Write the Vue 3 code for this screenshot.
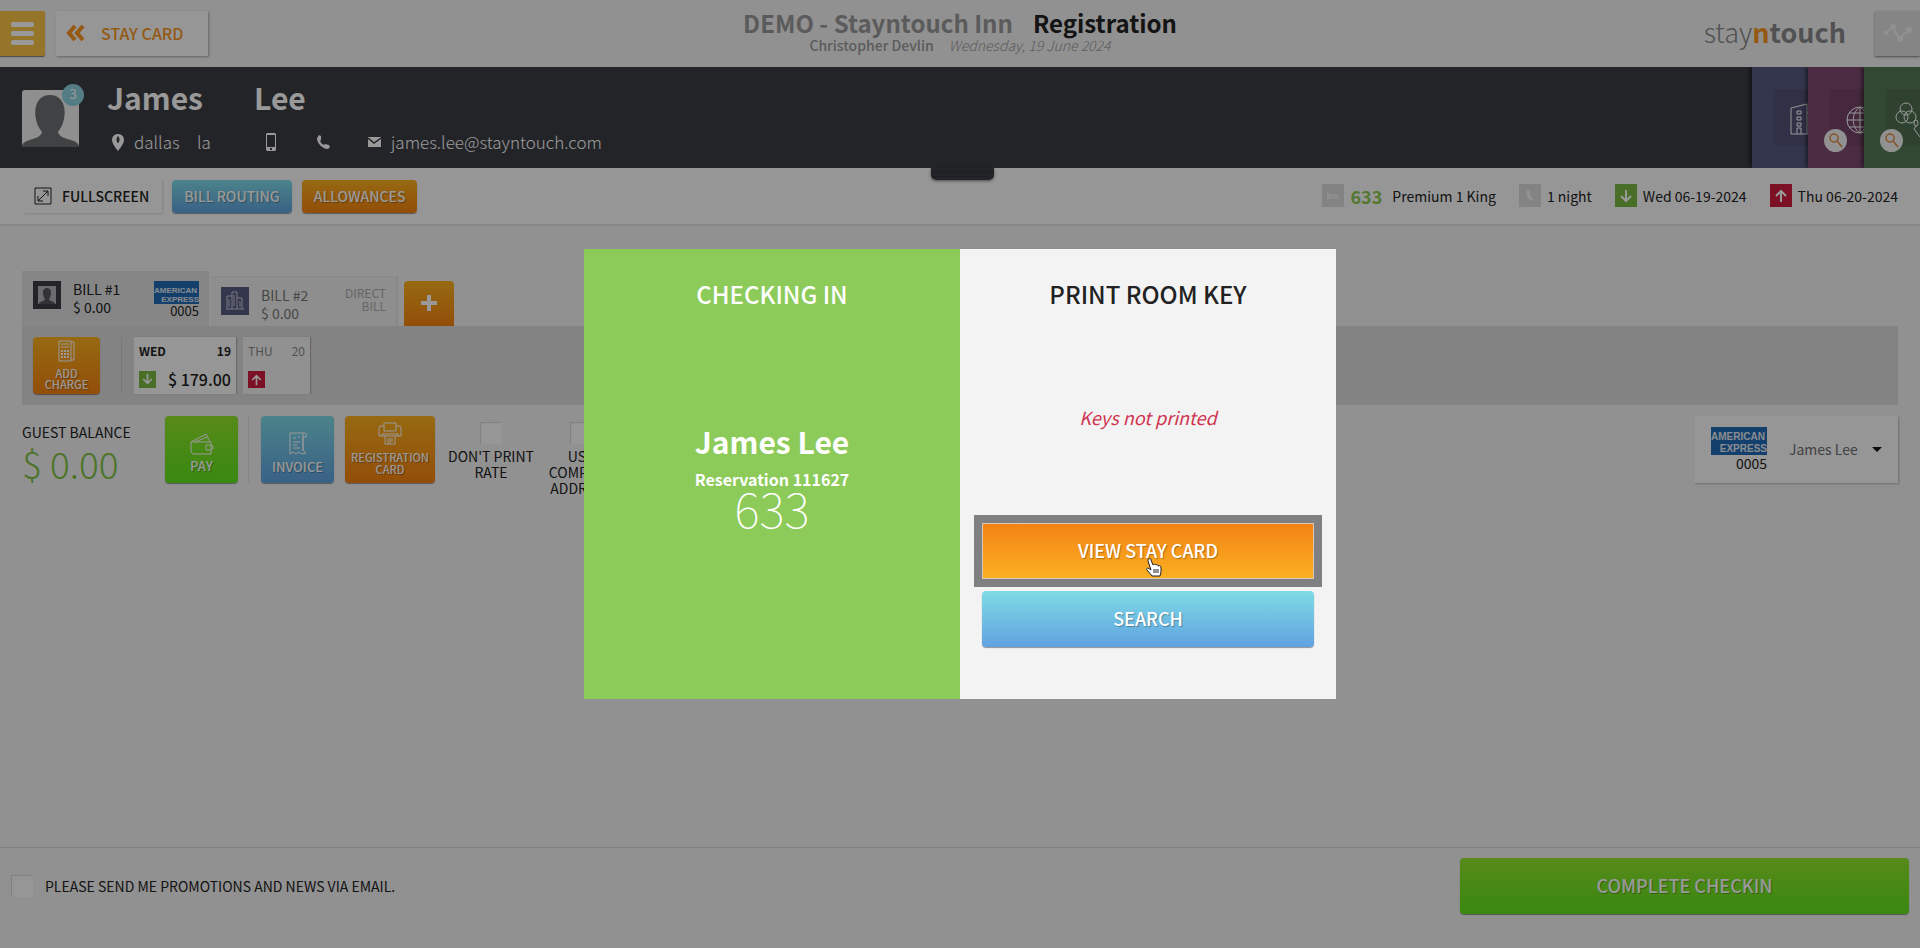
<template>
  <div class="page">
    <header class="top-bar">
      <div class="top-left">
        <button type="button" class="menu-btn" aria-label="Menu">
          <span></span><span></span><span></span>
        </button>
        <button type="button" class="back-btn">
          <svg width="20" height="18" viewBox="0 0 20 18">
            <path d="M9 2 L3 9 L9 16 M17 2 L11 9 L17 16" fill="none" stroke="currentColor" stroke-width="4" />
          </svg>
          STAY CARD
        </button>
      </div>
      <div class="top-title">
        <h1><span class="hotel">DEMO - Stayntouch Inn</span><span>Registration</span></h1>
        <p><strong>Christopher Devlin</strong><em>Wednesday, 19 June 2024</em></p>
      </div>
      <div class="top-right">
        <div class="logo"><span class="thin">stay</span><span class="accent">n</span><span>touch</span></div>
        <button type="button" class="activity-btn" aria-label="Activity">
          <svg width="30" height="22" viewBox="0 0 30 22">
            <path d="M3 11 L9 5 L17 17 L21 12 L26 9" fill="none" stroke="currentColor" stroke-width="2" />
            <circle cx="3" cy="11" r="2" fill="currentColor" />
            <circle cx="10" cy="5" r="3" fill="currentColor" />
            <circle cx="17" cy="17" r="3" fill="currentColor" />
            <circle cx="26" cy="8" r="3" fill="currentColor" />
          </svg>
        </button>
      </div>
    </header>

    <section class="guest-bar">
      <div class="avatar">
        <svg width="57" height="57" viewBox="0 0 57 57">
          <path d="M0 57 C0 48 18 51 20 42 C10 30 10 5 28 5 C46 5 46 30 36 42 C38 51 57 48 57 57 Z" fill="#6d6e70" />
        </svg>
        <span class="badge">3</span>
      </div>
      <div class="guest-info">
        <h2><span class="first-name">James</span><span>Lee</span></h2>
        <div class="contacts">
          <span class="contact city">
            <svg width="12" height="17" viewBox="0 0 12 17">
              <path fill-rule="evenodd" d="M6 0 C2 0 0 3 0 6 C0 10 6 17 6 17 C6 17 12 10 12 6 C12 3 10 0 6 0 Z M6 2 A3 4 0 0 1 6 9 A3 4 0 0 1 6 2 Z" fill="currentColor" />
            </svg>
            dallas
          </span>
          <span class="contact state">la</span>
          <span class="contact mobile">
            <svg width="10" height="18" viewBox="0 0 10 18">
              <path fill-rule="evenodd" d="M1 0 H9 L10 1 V17 L9 18 H1 L0 17 V1 Z M1 2 V14 H9 V2 Z M4 15 V17 H6 V15 Z" fill="currentColor" />
            </svg>
          </span>
          <span class="contact phone">
            <svg width="13" height="14" viewBox="0 0 13 14">
              <path d="M2 0 L4 1 L4 5 L3 6 C4 8 5 9 7 10 L8 9 L12 10 L13 12 L11 14 C6 14 0 9 0 3 Z" fill="currentColor" />
            </svg>
          </span>
          <span class="contact">
            <svg width="13" height="10" viewBox="0 0 13 10">
              <path d="M0 0 H13 V10 H0 Z" fill="currentColor" />
              <path d="M0 1 L6 6 L13 1" fill="none" stroke="#3b3d43" stroke-width="1.5" />
            </svg>
            james.lee@stayntouch.com
          </span>
        </div>
      </div>
      <div class="side-cards">
        <a href="#" class="side-card company" aria-label="Company">
          <span class="tile">
            <svg width="34" height="34" viewBox="0 0 34 34">
              <path d="M1 31 V5 L17 1 V31 Z M17 10 H30 V31 H17 M7 31 V25 H11 V31 M7 8 H11 V11 H7 Z M7 14 H11 V17 H7 Z M7 20 H11 V23 H7 Z" />
            </svg>
          </span>
        </a>
        <a href="#" class="side-card agent" aria-label="Travel agent">
          <span class="tile">
            <svg width="34" height="34" viewBox="0 0 34 34">
              <path d="M14 4 A13 13 0 0 1 14 30 A13 13 0 0 1 14 4 Z M14 4 V30 M1 17 H27 M3 10 H25 M3 24 H25 M14 4 C5 10 5 24 14 30 M14 4 C23 10 23 24 14 30" />
            </svg>
          </span>
          <span class="find">
            <svg width="14" height="15" viewBox="0 0 14 15">
              <circle cx="5" cy="5" r="4" />
              <path d="M8 8 L13 14" />
            </svg>
          </span>
        </a>
        <a href="#" class="side-card group" aria-label="Group">
          <span class="tile">
            <svg width="40" height="40" viewBox="0 0 40 40">
              <circle cx="14" cy="8" r="6" />
              <circle cx="10" cy="16" r="6" />
              <circle cx="18" cy="16" r="6" />
              <path d="M24 19 A2 3 0 0 1 24 25 A2 3 0 0 1 24 19 M24 25 L22 28 L28 36 L34 36" />
            </svg>
          </span>
          <span class="find">
            <svg width="14" height="15" viewBox="0 0 14 15">
              <circle cx="5" cy="5" r="4" />
              <path d="M8 8 L13 14" />
            </svg>
          </span>
        </a>
      </div>
      <span class="drag-handle"></span>
    </section>

    <section class="toolbar">
      <div class="tool-buttons">
        <button type="button" class="plain-btn">
          <svg width="18" height="18" viewBox="0 0 18 18">
            <path d="M1 1 H17 V17 H1 Z M4 14 L14 4 M9 4 H14 V9 M4 9 V14 H9" fill="none" stroke="currentColor" />
          </svg>
          FULLSCREEN
        </button>
        <button type="button" class="btn blue small">BILL ROUTING</button>
        <button type="button" class="btn orange small">ALLOWANCES</button>
      </div>
      <ul class="stay-info">
        <li>
          <span class="chip">
            <svg width="14" height="10" viewBox="0 0 16 12">
              <path d="M2 2 V10 M2 8 H14 V10 M4 5 H7 M8 5 H14" fill="none" stroke="currentColor" stroke-width="2" />
            </svg>
          </span>
          <b class="room">633</b>Premium 1 King
        </li>
        <li>
          <span class="chip">
            <svg width="14" height="14" viewBox="0 0 14 14">
              <path d="M4 1 C2 8 6 13 13 11 C8 10 7 7 7 2 Z" fill="currentColor" />
            </svg>
          </span>
          1 night
        </li>
        <li>
          <span class="chip in">
            <svg width="12" height="14" viewBox="0 0 12 14"><path d="M6 1 V12 M1 7 L6 12 L11 7" /></svg>
          </span>
          Wed 06-19-2024
        </li>
        <li>
          <span class="chip out">
            <svg width="12" height="14" viewBox="0 0 12 14"><path d="M6 13 V2 M1 7 L6 2 L11 7" /></svg>
          </span>
          Thu 06-20-2024
        </li>
      </ul>
    </section>

    <main class="content">
      <div class="tabs">
        <button type="button" class="tab active">
          <span class="tab-icon dark">
            <svg width="18" height="18" viewBox="0 0 18 18">
              <path d="M0 0 H18 V18 H0 Z" fill="#b4b5b7" />
              <path d="M1 18 C1 15 6 16 7 13 C4 9 4 2 9 2 C14 2 14 9 11 13 C12 16 17 15 17 18 Z" fill="#55565a" />
            </svg>
          </span>
          <span class="tab-text">BILL #1<br />$ 0.00</span>
          <span class="card-type">
            <span class="amex"><span>AMERICAN</span><span>EXPRESS</span></span>
            0005
          </span>
        </button>
        <button type="button" class="tab">
          <span class="tab-icon purple">
            <svg width="18" height="20" viewBox="0 0 18 20">
              <path d="M1 18 V5 H6 M6 18 V1 H11 V18 M11 7 H16 V18 M0 18 H18 M3 8 V16 M8 4 V15 M14 10 V16" fill="none" stroke="#c9c8d6" />
            </svg>
          </span>
          <span class="tab-text">BILL #2<br />$ 0.00</span>
          <span class="direct">DIRECT<br />BILL</span>
        </button>
        <button type="button" class="add-tab orange" aria-label="Add bill">
          <svg width="18" height="18" viewBox="0 0 18 18"><path d="M9 1 V17 M1 9 H17" stroke="#fff" stroke-width="4" /></svg>
        </button>
      </div>

      <div class="bill-panel">
        <button type="button" class="btn orange charge">
          <svg width="17" height="22" viewBox="0 0 17 22">
            <path d="M1 1 H13 V21 H1 Z M13 2 H16 V20 H13 M3 4 H11 M3 7 H11" />
            <path d="M3 11 H12 M3 14 H12 M3 17 H12" stroke-width="2" stroke-dasharray="2 1" />
          </svg>
          <span>ADD<br />CHARGE</span>
        </button>
        <div class="days">
          <div v-for="day in days" :key="day.name" class="day" :class="day.kind">
            <div class="day-row head"><span>{{ day.name }}</span><span>{{ day.date }}</span></div>
            <div class="day-row">
              <span class="chip mini" :class="day.kind">
                <svg width="11" height="12" viewBox="0 0 12 14">
                  <path :d="day.kind === 'in' ? 'M6 1 V12 M1 7 L6 12 L11 7' : 'M6 13 V2 M1 7 L6 2 L11 7'" />
                </svg>
              </span>
              <b>{{ day.amount }}</b>
            </div>
          </div>
        </div>
      </div>

      <div class="balance-row">
        <div class="balance">
          <span>GUEST BALANCE</span>
          <strong>$ 0.00</strong>
        </div>
        <div class="pay-wrap">
          <button type="button" class="btn green square">
            <svg width="24" height="22" viewBox="0 0 24 22">
              <path d="M1 9 H21 V21 H3 L1 19 Z M1 9 L16 1 L20 9 M5 9 L17 4 M21 12 H16 V17 H21 M21 13 H23 V16 H21" />
            </svg>
            PAY
          </button>
        </div>
        <button type="button" class="btn blue square">
          <svg width="20" height="24" viewBox="0 0 20 24">
            <path d="M2 1 H15 V18 L18 21 L14 22 L11 20 L8 22 L5 20 L2 22 Z M15 1 C18 0 19 2 18 5 H15 M15 5 V19 M5 6 H8 M10 5 H12 M5 10 H12 M5 13 H9 M5 16 H12" />
          </svg>
          INVOICE
        </button>
        <button type="button" class="btn orange reg-card">
          <svg width="24" height="24" viewBox="0 0 24 24">
            <path d="M6 9 V1 H18 V9 Z M6 4 H2 L1 6 V14 H23 V6 L22 4 H18 M4 14 V12 H20 V14 M7 14 V22 H17 V14 M9 17 H15 M9 19 H15 M9 21 H13" />
          </svg>
          <span>REGISTRATION<br />CARD</span>
        </button>
        <div class="options">
          <label class="option"><input v-model="hideRate" type="checkbox" />DON'T PRINT RATE</label>
          <label class="option"><input v-model="companyAddress" type="checkbox" />USE COMPANY ADDRESS</label>
        </div>
        <div class="payer">
          <span class="card-type large">
            <span class="amex"><span>AMERICAN</span><span>EXPRESS</span></span>
            0005
          </span>
          <select v-model="payer" aria-label="Payer">
            <option>James Lee</option>
          </select>
          <svg class="caret" width="10" height="5" viewBox="0 0 10 5"><path d="M0 0 H10 L5 5 Z" fill="#111" /></svg>
        </div>
      </div>
    </main>

    <footer class="footer">
      <label class="promo"><input v-model="promotions" type="checkbox" />PLEASE SEND ME PROMOTIONS AND NEWS VIA EMAIL.</label>
      <button type="button" class="btn green complete">COMPLETE CHECKIN</button>
    </footer>

    <div class="overlay">
      <div class="dialog" role="dialog" aria-modal="true" aria-label="Checking in">
        <div class="dialog-left">
          <h3>CHECKING IN</h3>
          <div class="summary">
            <p class="guest">James Lee</p>
            <p class="reservation">Reservation 111627</p>
            <p class="room-no">633</p>
          </div>
        </div>
        <div class="dialog-right">
          <h3>PRINT ROOM KEY</h3>
          <p class="key-status">Keys not printed</p>
          <div class="dialog-actions">
            <button type="button" class="btn view-card">VIEW STAY CARD
              <svg class="pointer" width="18" height="19" viewBox="0 0 18 19">
                <path d="M4 1 C5 0 6 1 6 2 L8 7 C9 6 10 6 11 7 C12 6 13 7 13 8 C15 7 16 8 16 10 L16 14 L15 18 H7 L2 12 C1 11 2 10 3 10 L6 12 L3 3 C3 2 3 1 4 1 Z" fill="#fff" stroke="#222" />
                <path d="M9 11 V15 M11 11 V15 M13 11 V15" stroke="#222" />
              </svg>
            </button>
            <button type="button" class="btn blue">SEARCH</button>
          </div>
        </div>
      </div>
    </div>
  </div>
</template>

<script setup>
import { ref } from 'vue';

const hideRate = ref(false);
const companyAddress = ref(false);
const promotions = ref(false);
const payer = ref('James Lee');

const days = [
  { name: 'WED', date: '19', kind: 'in', amount: '$ 179.00' },
  { name: 'THU', date: '20', kind: 'out', amount: '' }
];
</script>

<style>
body {
  background: #f2f2f2;
}
</style>

<style scoped>
* {
  box-sizing: border-box;
}

.page {
  min-height: 100vh;
  display: flex;
  flex-direction: column;
  background: #f2f2f2;
  color: #222;
  font-family: "Noto Sans CJK SC", "Noto Sans", sans-serif;
  font-size: 14px;
  line-height: 16px;
  overflow: hidden;
}

h1, h2, h3, p, ul {
  margin: 0;
  padding: 0;
}

button, input, select {
  font: inherit;
  color: inherit;
  margin: 0;
  padding: 0;
  border: none;
}

button {
  cursor: pointer;
}

svg {
  flex: none;
}

.btn {
  display: flex;
  flex-direction: column;
  justify-content: center;
  align-items: center;
  padding-bottom: 2px;
  color: #fff;
  font-weight: 500;
  border-radius: 4px;
  text-shadow: 1px 1px 1px rgba(0, 0, 0, 0.3);
  box-shadow: 0 1px 1px rgba(0, 0, 0, 0.4);
}

.btn svg {
  fill: none;
  stroke: currentColor;
}

.blue {
  background: linear-gradient(#7edbe6, #60a2e0);
}

.orange {
  background: linear-gradient(#fbb01f, #f4820f);
}

.green {
  background: linear-gradient(#92e62b, #5fe41c);
}

.top-bar {
  height: 67px;
  display: grid;
  grid-template-columns: 1fr auto 1fr;
  align-items: center;
}

.top-left {
  display: flex;
  gap: 11px;
}

.menu-btn {
  width: 45px;
  height: 45px;
  padding-left: 11px;
  display: flex;
  flex-direction: column;
  justify-content: center;
  gap: 4px;
  background: #f9c446;
  border-radius: 0 2px 2px 0;
  box-shadow: 0 1px 1px rgba(0, 0, 0, 0.5);
}

.menu-btn span {
  width: 23px;
  height: 5px;
  border-radius: 2px;
  background: #fff;
}

.back-btn {
  height: 45px;
  display: flex;
  align-items: center;
  padding: 0 24px 2px 10px;
  gap: 15px;
  background: #fafafa;
  color: #f7941e;
  font-size: 16px;
  font-weight: 500;
  box-shadow: 1px 1px 2px rgba(0, 0, 0, 0.3);
}

.top-title {
  padding-bottom: 5px;
  text-align: center;
}

.top-title h1 {
  font-size: 24px;
  line-height: 28px;
}

.top-title .hotel {
  color: #98989a;
  margin-right: 20px;
}

.top-title p {
  color: #999;
}

.top-title strong {
  font-weight: 500;
  margin-right: 15px;
}

.top-title em {
  font-weight: 300;
}

.top-right {
  display: flex;
  justify-content: flex-end;
  align-items: center;
  gap: 29px;
}

.logo {
  padding-bottom: 4px;
  font-size: 27px;
  line-height: 32px;
  font-weight: 700;
  color: #88888a;
}

.logo .thin {
  font-weight: 300;
}

.logo .accent {
  color: #f7941e;
}

.activity-btn {
  width: 45px;
  height: 45px;
  background: #dedede;
  color: #f2f2f2;
  box-shadow: 0 1px 2px rgba(0, 0, 0, 0.5);
}

.guest-bar {
  position: relative;
  height: 101px;
  display: flex;
  background: #3b3d43;
  color: #fff;
}

.avatar {
  position: relative;
  width: 57px;
  height: 57px;
  margin: 23px 0 0 22px;
  background: #eee;
  border-radius: 3px;
}

.badge {
  position: absolute;
  top: -6px;
  right: -5px;
  width: 22px;
  height: 22px;
  border-radius: 50%;
  background: #8ad0dc;
  font-size: 13px;
  line-height: 20px;
  text-align: center;
}

.guest-info {
  flex: 1;
  padding: 12px 0 0 28px;
}

.guest-info h2 {
  display: flex;
  font-size: 30px;
  line-height: 36px;
}

.first-name {
  width: 147px;
}

.contacts {
  display: flex;
  margin-top: 17px;
  padding-left: 5px;
  font-size: 17px;
  line-height: 20px;
  font-weight: 300;
}

.contact {
  display: flex;
  align-items: center;
  gap: 10px;
}

.city {
  width: 85px;
}

.state {
  width: 69px;
}

.mobile {
  width: 51px;
}

.phone {
  width: 51px;
}

.side-cards {
  display: flex;
  padding-left: 6px;
  overflow: hidden;
}

.side-card {
  position: relative;
  width: 56px;
  overflow: hidden;
  padding: 22px 0 0 22px;
  box-shadow: -2px 0 4px rgba(0, 0, 0, 0.5);
}

.company {
  background: #575a80;
}

.agent {
  background: #7d4a70;
}

.group {
  background: #547956;
}

.tile {
  display: block;
  width: 57px;
  height: 57px;
  padding: 14px 0 0 16px;
  background: rgba(0, 0, 0, 0.08);
}

.group .tile {
  padding: 12px 0 0 6px;
}

.tile svg {
  fill: none;
  stroke: #fff;
}

.find {
  position: absolute;
  left: 16px;
  bottom: 16px;
  width: 23px;
  height: 23px;
  display: flex;
  justify-content: center;
  align-items: center;
  border-radius: 50%;
  background: #f2f2f2;
}

.find svg {
  fill: none;
  stroke: #e08a3c;
  stroke-width: 1.5;
}

.drag-handle {
  position: absolute;
  left: calc(50% - 29px);
  top: 100%;
  width: 63px;
  height: 12px;
  background: linear-gradient(#3b3d43 4px, #303238 4px 5px, #3b3d43 5px 8px, #303238 8px 9px, #3b3d43 9px);
  border-radius: 0 0 5px 5px;
  box-shadow: 0 1px 3px rgba(0, 0, 0, 0.5);
}

.toolbar {
  height: 58px;
  display: flex;
  justify-content: space-between;
  align-items: flex-start;
  padding: 12px 22px 0 24px;
  background: #fafafa;
  border-bottom: 2px solid #e2e2e2;
}

.tool-buttons {
  display: flex;
  gap: 10px;
}

.small {
  height: 33px;
  padding: 0 12px 2px;
}

.plain-btn {
  height: 33px;
  display: flex;
  align-items: center;
  gap: 10px;
  padding: 0 13px 2px 10px;
  background: #fafafa;
  font-weight: 500;
  box-shadow: 1px 1px 2px rgba(0, 0, 0, 0.15);
}

.stay-info {
  display: flex;
  gap: 23px;
  margin-top: 4px;
  list-style: none;
}

.stay-info li {
  display: flex;
  align-items: center;
  gap: 6px;
}

.room {
  margin-right: 4px;
  font-size: 18px;
  color: #8cc84f;
}

.chip {
  width: 22px;
  height: 23px;
  display: flex;
  justify-content: center;
  align-items: center;
  background: #dadada;
  color: #f2f2f2;
}

.chip.mini {
  width: 17px;
  height: 17px;
}

.chip.in, .chip.out {
  background: #79b844;
}

.chip.out {
  background: #cf1b3f;
}

.chip.in svg, .chip.out svg {
  fill: none;
  stroke: #fff;
  stroke-width: 2;
}

.content {
  flex: 1;
  padding: 45px 22px 0;
}

.tabs {
  display: flex;
  align-items: flex-end;
  gap: 2px;
}

.tab {
  width: 187px;
  height: 50px;
  display: flex;
  align-items: flex-start;
  padding: 10px 12px 0 10px;
  background: #ededed;
  color: #777;
  font-size: 14px;
  line-height: 18px;
  text-align: left;
  box-shadow: inset -2px 1px 1px rgba(0, 0, 0, 0.04);
}

.tab.active {
  height: 55px;
  padding: 9px 10px 0 11px;
  background: #dfdfdf;
  color: #222;
  box-shadow: none;
}

.tab-icon {
  width: 28px;
  height: 28px;
  margin: 1px 12px 0 0;
  display: flex;
  justify-content: center;
  align-items: center;
}

.dark {
  background: #3b3d43;
}

.purple {
  background: #575a80;
}

.tab-text {
  flex: 1;
}

.direct {
  color: #aaa;
  font-size: 12px;
  line-height: 13px;
  text-align: right;
}

.card-type {
  padding-top: 1px;
  display: flex;
  flex-direction: column;
  align-items: flex-end;
  font-size: 13px;
  line-height: 13px;
}

.amex {
  width: 45px;
  height: 23px;
  display: flex;
  flex-direction: column;
  justify-content: flex-end;
  background: #2069b5;
  color: #e4e9f0;
  font-family: "Liberation Sans", sans-serif;
  font-size: 8px;
  line-height: 9px;
  font-weight: 700;
}

.amex span:last-child {
  text-align: right;
}

.large .amex {
  width: 56px;
  height: 28px;
  font-size: 10px;
  line-height: 12px;
}

.card-type.large {
  padding-top: 0;
  font-size: 14px;
  line-height: 16px;
}

.add-tab {
  width: 50px;
  height: 45px;
  margin-left: 4px;
  border-radius: 4px 4px 0 0;
}

.bill-panel {
  height: 79px;
  display: flex;
  padding: 11px;
  background: #dadada;
}

.charge {
  width: 67px;
  height: 57px;
  gap: 6px;
  font-size: 11px;
  line-height: 11px;
}

.days {
  display: flex;
  gap: 7px;
  margin-left: 21px;
  padding-left: 12px;
  border-left: 1px solid #c8c8c8;
}

.day {
  width: 102px;
  height: 57px;
  padding: 4px 5px 6px;
  display: flex;
  flex-direction: column;
  justify-content: space-between;
  background: #fafafa;
  box-shadow: 1px 0 1px rgba(0, 0, 0, 0.2);
}

.day.out {
  width: 67px;
  background: #f2f2f2;
}

.day-row {
  display: flex;
  justify-content: space-between;
  align-items: center;
}

.day-row.head {
  font-size: 12px;
  line-height: 19px;
  font-weight: 700;
}

.out .day-row.head {
  font-weight: 400;
  color: #888;
}

.day-row b {
  font-size: 16px;
  font-weight: 500;
  line-height: 18px;
}

.balance-row {
  display: flex;
  align-items: flex-start;
  margin-top: 11px;
}

.balance {
  width: 143px;
  padding-top: 8px;
  display: flex;
  flex-direction: column;
}

.balance strong {
  margin-top: 2px;
  font-size: 37px;
  line-height: 42px;
  font-weight: 300;
  color: #7fc143;
}

.pay-wrap {
  padding-right: 10px;
  margin-right: 12px;
  border-right: 1px solid #ddd;
}

.square {
  width: 73px;
  height: 67px;
  padding: 8px 0 0;
  gap: 3px;
  font-size: 13px;
}

.reg-card {
  width: 90px;
  height: 67px;
  margin-left: 11px;
  gap: 5px;
  font-size: 11px;
  line-height: 12px;
}

.options {
  display: flex;
  gap: 4px;
  margin-left: 13px;
}

.option {
  width: 86px;
  padding-top: 6px;
  display: flex;
  flex-direction: column;
  align-items: center;
  gap: 4px;
  text-align: center;
}

.option input, .promo input {
  appearance: none;
  width: 22px;
  height: 22px;
  background: #fafafa;
  box-shadow: inset 1px 1px 1px rgba(0, 0, 0, 0.15);
}

.payer {
  position: relative;
  width: 204px;
  height: 67px;
  margin-left: auto;
  padding: 11px 16px 0 17px;
  display: flex;
  gap: 22px;
  background: #fafafa;
  box-shadow: 1px 1px 2px rgba(0, 0, 0, 0.25);
}

.payer select {
  appearance: none;
  flex: 1;
  height: 43px;
  background: transparent;
  color: #6d6e70;
}

.caret {
  position: absolute;
  right: 16px;
  top: 31px;
  pointer-events: none;
}

.footer {
  height: 101px;
  display: flex;
  justify-content: space-between;
  align-items: flex-start;
  padding: 10px 11px 0;
  border-top: 1px solid #d4d4d4;
}

.promo {
  height: 55px;
  display: flex;
  align-items: center;
  gap: 12px;
}

.complete {
  width: 449px;
  height: 56px;
  font-size: 18px;
}

.overlay {
  position: fixed;
  inset: 0;
  display: flex;
  justify-content: center;
  align-items: center;
  background: rgba(0, 0, 0, 0.4);
}

.dialog {
  width: 752px;
  min-height: 450px;
  display: grid;
  grid-template-columns: 1fr 1fr;
  background: #f3f3f3;
}

.dialog h3 {
  font-size: 24px;
  line-height: 32px;
  font-weight: 500;
  text-align: center;
}

.dialog-left, .dialog-right {
  padding: 29px 22px 0;
  text-align: center;
}

.dialog-left {
  background: #8ccb5a;
  color: #fff;
}

.summary {
  padding-top: 111px;
}

.guest {
  font-size: 30px;
  line-height: 40px;
  font-weight: 700;
}

.reservation {
  margin-top: 8px;
  font-size: 16px;
  line-height: 20px;
  font-weight: 700;
}

.room-no {
  font-size: 48px;
  line-height: 36px;
  font-weight: 100;
}

.key-status {
  margin-top: 94px;
  color: #d0334f;
  font-size: 18px;
  line-height: 26px;
  font-style: italic;
}

.dialog-actions {
  margin-top: 93px;
  display: flex;
  flex-direction: column;
  gap: 12px;
}

.dialog-actions .btn {
  height: 56px;
  font-size: 18px;
}

.dialog-actions .view-card {
  position: relative;
  background: linear-gradient(#f48214, #fab022);
  border: 1px solid #d8c8b4;
  border-radius: 0;
  outline: 8px solid #808083;
}

.btn .pointer {
  position: absolute;
  left: 49%;
  top: 34px;
  stroke: none;
}
</style>
